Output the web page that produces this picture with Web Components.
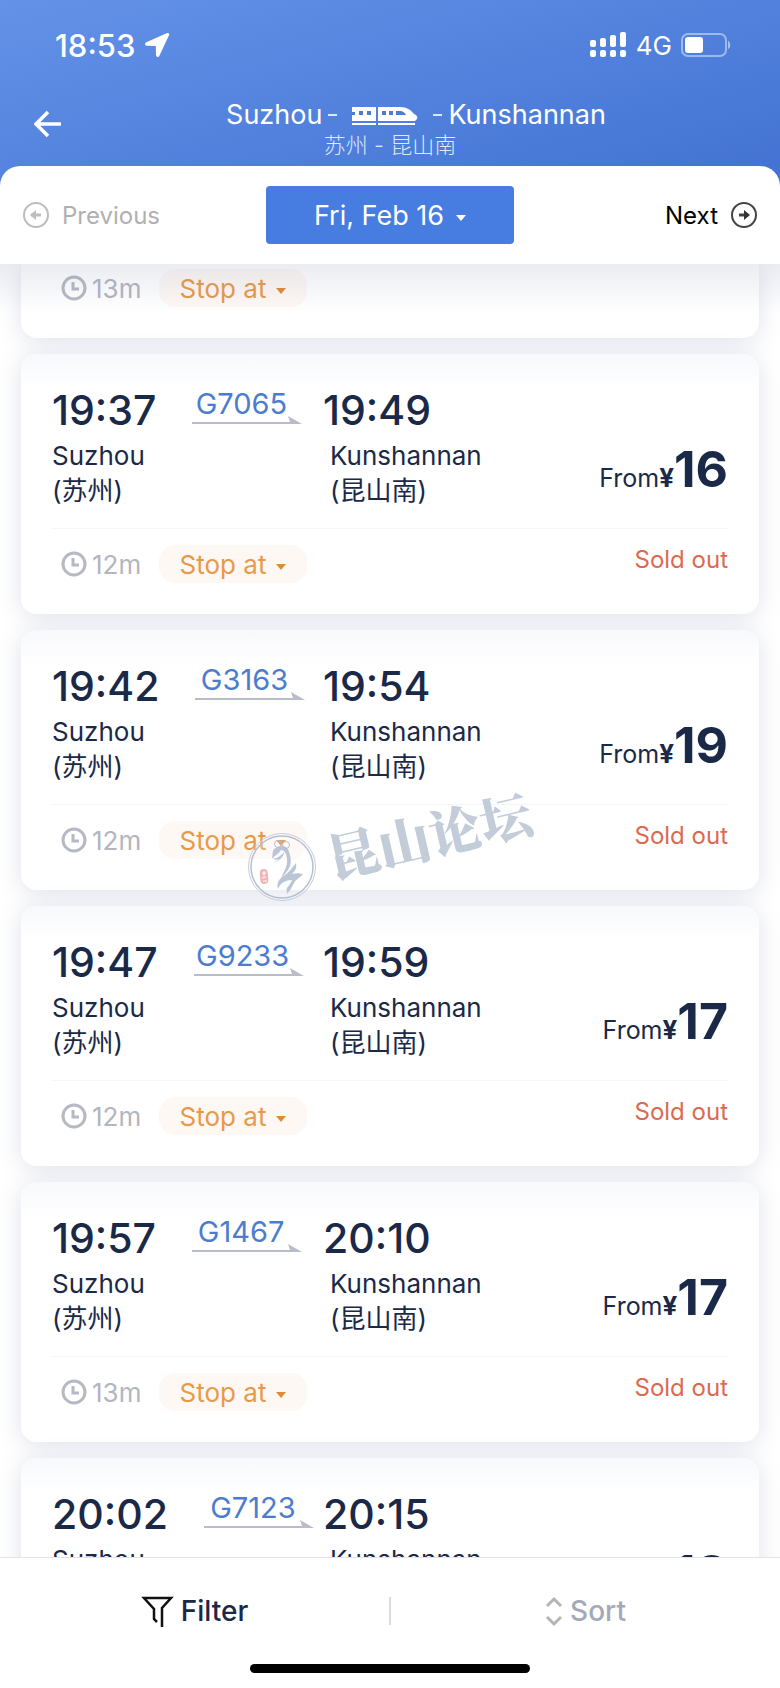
<!DOCTYPE html>
<html lang="en">
<head>
  <meta charset="utf-8">
  <meta name="viewport" content="width=device-width, initial-scale=1">
  <title>Suzhou - Kunshannan</title>
  <style>
    html, body {
      height: 100%;
      margin: 0;
    }

    body {
      font-family: Inter, "Noto Sans CJK SC", sans-serif;
      font-size: 26px;
      color: #1a2947;
      background: #fff;
    }
  </style>
</head>

<body>
  <template id="app-template">
    <style>
      :host {
        display: flex;
        flex-direction: column;
        height: 100vh;
        overflow: hidden;
      }

      header {
        background: linear-gradient(165deg, #6492e8 0%, #4f7fdb 50%, #3c6bcd 100%);
      }

      main {
        position: relative;
        flex: 1;
        min-height: 0;
        display: flex;
        flex-direction: column;
        gap: 16px;
        padding: 0 21px;
        overflow: hidden;
      }

      /* soft shade that the date bar drops on the list */
      main::before {
        content: "";
        position: absolute;
        z-index: 1;
        top: 0;
        left: 0;
        right: 0;
        height: 48px;
        background: linear-gradient(rgba(110, 122, 160, .14), rgba(110, 122, 160, 0));
      }
    </style>
    <header>
      <slot name="header"></slot>
    </header>
    <main>
      <slot></slot>
    </main>
    <slot name="footer"></slot>
  </template>

  <template id="status-template">
    <style>
      :host {
        display: flex;
        align-items: center;
        justify-content: space-between;
        height: 90px;
        padding: 0 49px 0 55px;
        color: #fff;
      }

      div {
        display: flex;
        align-items: center;
        gap: 9px;
      }

      time {
        font-size: 31px;
        font-weight: 500;
      }
    </style>
    <div>
      <time>18:53</time>
      <svg width="26" height="26" viewBox="0 0 26 26" fill="#fff">
        <path d="M23.2 1.1 2.3 10.3c-2 .9-1.5 3.4.5 3.4l9 .2.2 9.200c0 2.100 2.500 2.500 3.400.6L25 3.200c.7-1.500-.4-2.700-1.800-2.100z"/>
      </svg>
    </div>
    <div>
      <svg width="37" height="26" viewBox="0 0 37 26" fill="#fff">
        <rect x="0" y="8" width="6" height="7" rx="2"/>
        <rect x="10" y="6" width="6" height="9" rx="2"/>
        <rect x="20" y="3" width="6" height="12" rx="2"/>
        <rect x="30" y="0" width="6" height="15" rx="2"/>
        <rect x="0" y="18" width="6" height="7" rx="2"/>
        <rect x="10" y="18" width="6" height="7" rx="2"/>
        <rect x="20" y="18" width="6" height="7" rx="2"/>
        <rect x="30" y="18" width="6" height="7" rx="2"/>
      </svg>
      <span>4G</span>
      <svg width="50" height="24" viewBox="0 0 50 24">
        <rect x="1" y="1" width="44" height="22" rx="6" fill="none" stroke="#fff" stroke-opacity=".45" stroke-width="2"/>
        <rect x="4" y="4" width="18" height="16" rx="3" fill="#fff"/>
        <path d="M47 8c3 1 3 7 0 8z" fill="#fff" fill-opacity=".5"/>
      </svg>
    </div>
  </template>

  <template id="route-template">
    <style>
      :host {
        display: grid;
        grid-template-columns: 68px 1fr 68px;
        align-items: center;
        height: 76px;
        color: #fff;
      }

      button {
        justify-self: end;
        margin-bottom: 8px;
        padding: 0;
        border: 0;
        background: none;
        line-height: 0;
      }

      section {
        display: flex;
        flex-direction: column;
        align-items: center;
      }

      h1 {
        display: flex;
        align-items: center;
        gap: 6px;
        margin: 0;
        padding: 2px 0 0 52px;
        font-size: 27px;
        font-weight: 400;
        line-height: 32px;
      }

      h1 svg {
        margin: 4px 9px 0;
      }

      i {
        width: 9px;
        height: 2px;
        background: #dbe6fa;
      }

      p {
        margin: 0;
        font-size: 22px;
        font-weight: 300;
        line-height: 28px;
        color: #dfe9fb;
      }
    </style>
    <button aria-label="Back">
      <svg width="34" height="30" viewBox="0 0 34 30" fill="none" stroke="#fff" stroke-width="3.500">
        <path d="M27 15H3M14 3 2 15l12 12"/>
      </svg>
    </button>
    <section>
      <h1>
        <slot name="from"></slot>
        <i></i>
        <svg width="66" height="20" viewBox="0 0 66 20">
          <path d="M0 0h24v14H0zM26 0h22c7 0 11 3 14 7 3 1 4 3 3 5l-2 2H26z" fill="#fff"/>
          <path d="M0 17h24M26 17h37" stroke="#fff" stroke-width="2"/>
          <path d="M0 5h3v3H0zM7 4h4v4H7zM15 4h4v4h-4zM30 4h4v4h-4zM37 4h4v4h-4zM44 4h4c3 0 5 2 6 4H44z" fill="#4c7bd7"/>
        </svg>
        <i></i>
        <slot name="to"></slot>
      </h1>
      <p><slot name="local"></slot></p>
    </section>
  </template>

  <template id="date-template">
    <style>
      :host {
        display: grid;
        grid-template-columns: 1fr 248px 1fr;
        align-items: center;
        height: 98px;
        padding: 0 22px;
        border-radius: 20px 20px 0 0;
        background: #fff;
      }

      button {
        display: flex;
        align-items: center;
        gap: 12px;
        padding: 0;
        border: 0;
        background: none;
        font: inherit;
        font-size: 24px;
        color: #000;
      }

      .previous {
        justify-self: start;
        color: #b0b0b3;
      }

      .next {
        justify-self: end;
      }

      .date {
        justify-content: center;
        height: 58px;
        border-radius: 4px;
        background: #477ce0;
        font-size: 27px;
        color: #fff;
      }

      .date svg {
        margin-top: 6px;
      }
    </style>
    <button class="previous" disabled>
      <svg width="28" height="28" viewBox="0 0 28 28" fill="none" stroke="#bdbdbf" stroke-width="2">
        <circle cx="14" cy="14" r="12"/>
        <path d="M9 14h10" stroke-width="3"/>
        <path d="m8 14 6-5v10z" fill="#bdbdbf" stroke="none"/>
      </svg>
      <span>Previous</span>
    </button>
    <button class="date">
      <slot></slot>
      <svg width="10" height="6" viewBox="0 0 10 6" fill="#fff"><path d="M0 0h10L5 6z"/></svg>
    </button>
    <button class="next">
      <span>Next</span>
      <svg width="28" height="28" viewBox="0 0 28 28" fill="none" stroke="#444" stroke-width="2">
        <circle cx="14" cy="14" r="12"/>
        <path d="M9 14h9" stroke-width="3"/>
        <path d="m20 14-6-5v10z" fill="#333" stroke="none"/>
      </svg>
    </button>
  </template>

  <template id="train-template">
    <style>
      :host {
        display: block;
        flex: none;
        padding: 30px 31px 31px;
        border-radius: 16px;
        background: linear-gradient(#f8f9fc, #fff 36px);
        box-shadow: 0 3px 24px rgba(100, 112, 156, .2);
      }

      .journey {
        display: grid;
        grid-template-columns: 271px 1fr auto;
        row-gap: 2px;
      }

      .depart {
        display: flex;
        align-items: flex-start;
        gap: 35px;
        height: 52px;
      }

      time {
        font-size: 41px;
        font-weight: 500;
        line-height: 52px;
      }

      a {
        display: flex;
        flex-direction: column;
        align-items: center;
        padding-top: 8px;
        font-size: 29px;
        line-height: 24px;
        color: #4b7cd0;
        text-decoration: none;
      }

      a span {
        padding-right: 12px;
      }

      p {
        margin: 0;
        line-height: 35px;
      }

      .to {
        padding-left: 7px;
      }

      .price {
        display: flex;
        align-items: baseline;
        align-self: end;
        margin: 0 0 6px;
        font-size: 25px;
        line-height: 48px;
      }

      .price b {
        font-size: 26px;
      }

      .price strong {
        font-size: 50px;
      }

      .details {
        display: flex;
        align-items: center;
        height: 38px;
        margin-top: 20px;
        padding-top: 16px;
        border-top: 1px solid #f5f5f7;
      }

      .duration {
        display: flex;
        align-items: center;
        gap: 4px;
        width: 98px;
        padding-left: 9px;
        color: #b3b5c0;
      }

      button {
        display: flex;
        align-items: center;
        justify-content: center;
        gap: 10px;
        width: 148px;
        height: 38px;
        padding: 0;
        border: 0;
        border-radius: 16px;
        background: #fef8f4;
        font: inherit;
        color: #e69a4a;
      }

      button svg {
        margin-top: 6px;
      }

      .state {
        margin: 0 0 10px auto;
        font-size: 24px;
        color: #dc6a50;
      }

      /* scrolled under the date bar: only the details row is left */
      :host([scrolled]) {
        padding-top: 0;
        border-radius: 0 0 16px 16px;
        background: #fff;
      }

      :host([scrolled]) .journey {
        display: none;
      }

      :host([scrolled]) .details {
        margin: 0;
        padding-top: 5px;
        border: 0;
      }
    </style>
    <div class="journey"></div>
    <div class="details">
      <span class="duration">
        <svg width="27" height="27" viewBox="0 0 27 27" fill="none" stroke="#b6b8c3" stroke-width="3">
          <circle cx="13" cy="13" r="11"/>
          <path d="M12 7v7h6"/>
        </svg>
        <span id="duration"></span>
      </span>
      <button>
        Stop at
        <svg width="10" height="6" viewBox="0 0 10 6" fill="#e08a35"><path d="M0 0h10L5 6z"/></svg>
      </button>
      <span class="state"></span>
    </div>
  </template>

  <template id="mark-template">
    <style>
      :host {
        position: absolute;
        z-index: 2;
        top: 556px;
        left: 247px;
        display: flex;
        align-items: center;
        gap: 8px;
        color: #c3ccd9;
        pointer-events: none;
      }

      span {
        font-family: "Noto Serif CJK SC", "Noto Sans CJK SC", sans-serif;
        font-size: 52px;
        font-weight: 900;
        line-height: 52px;
        transform: rotate(-13deg);
      }

      svg {
        margin-top: 12px;
      }

      div {
        display: flex;
        margin-top: -54px;
      }
    </style>
    <svg width="70" height="70" viewBox="0 0 70 70" fill="none" stroke="#b4bfd0">
      <circle cx="35" cy="35" r="33.500" fill="#fff" fill-opacity=".2" stroke="#c4cddb"/>
      <circle cx="35" cy="35" r="31" stroke-width="1.500"/>
      <g fill="#bac6d6" stroke="none">
        <path d="M27 17c6-4 11-4 14 0 2 5 4 11 2 17-2 5-5 8-9 12 3-7 7-12 6-19 0-5-3-9-6-9-2 4-6 5-9 9 1-5 0-7 2-10z"/>
        <path d="M26 27c5-1 9-4 11-7 0 6-6 9-11 11 3-2 5-3 6-4-2 1-4 1-6 0z"/>
        <path d="M31 57c-2-7 2-11 7-14 4-3 7-7 11-12 1 5-1 8-4 11 4-1 8-1 11 0-3 4-7 5-9 9-2 4-4 8-7 11 0-3-1-4 0-6 2-3 4-5 5-8-6 0-12 3-14 9z"/>
      </g>
      <circle cx="31" cy="12" r="3.500"/>
      <circle cx="39" cy="13" r="3.500"/>
      <rect x="13" y="37" width="8" height="15" rx="4" fill="#eeb5b5" stroke="none" transform="rotate(-6 17 44)"/>
      <path d="M15 41h4M17 39v5M15 46l4-1M16 49h4" stroke="#fff"/>
    </svg>
    <div><span><slot></slot></span></div>
  </template>

  <template id="toolbar-template">
    <style>
      :host {
        display: flex;
        flex: none;
        flex-direction: column;
        align-items: center;
        padding-bottom: 15px;
        border-top: 1px solid #e4e4e8;
        background: #fff;
      }

      nav {
        display: grid;
        grid-template-columns: 1fr 2px 1fr;
        align-items: center;
        width: 100%;
        height: 106px;
      }

      nav i {
        height: 28px;
        background: #dcdce0;
      }

      button {
        display: flex;
        align-items: center;
        justify-content: center;
        gap: 7px;
        padding: 0;
        border: 0;
        background: none;
        font: inherit;
        font-size: 28px;
        font-weight: 500;
        color: #1a2947;
      }

      .sort {
        color: #a3a9b8;
      }

      .home {
        width: 36%;
        height: 9px;
        border-radius: 5px;
        background: #000;
      }
    </style>
    <nav>
      <button>
        <svg width="33" height="33" viewBox="0 0 33 33" fill="none" stroke="#111" stroke-width="2.500">
          <path d="M21 32V13L30 3H3l10 11v10l3 3"/>
        </svg>
        <span>Filter</span>
      </button>
      <i></i>
      <button class="sort">
        <svg width="18" height="32" viewBox="0 0 18 32" fill="none" stroke="#b4b4b6" stroke-width="3">
          <path d="m2 11 7-7 7 7M2 22l7 7 7-7"/>
        </svg>
        <span>Sort</span>
      </button>
    </nav>
    <div class="home"></div>
  </template>

  <train-app>
    <status-bar slot="header"></status-bar>
    <route-title slot="header">
      <span slot="from">Suzhou</span>
      <span slot="to">Kunshannan</span>
      <span slot="local">苏州 - 昆山南</span>
    </route-title>
    <date-bar slot="header">Fri, Feb 16</date-bar>

    <train-card scrolled duration="13m"></train-card>
    <train-card train="G7065" depart="19:37" arrive="19:49" duration="12m" price="16" state="Sold out"></train-card>
    <train-card train="G3163" depart="19:42" arrive="19:54" duration="12m" price="19" state="Sold out"></train-card>
    <train-card train="G9233" depart="19:47" arrive="19:59" duration="12m" price="17" state="Sold out"></train-card>
    <train-card train="G1467" depart="19:57" arrive="20:10" duration="13m" price="17" state="Sold out"></train-card>
    <train-card train="G7123" depart="20:02" arrive="20:15" duration="13m" price="18" state="Sold out"></train-card>
    <forum-mark>昆山论坛</forum-mark>

    <tool-bar slot="footer"></tool-bar>
  </train-app>

  <script>
    class TemplateElement extends HTMLElement {

      constructor() {
        super();
        this.attachShadow({ mode: 'open' });
        var t = document.querySelector('#' + this.constructor.template);
        this.shadowRoot.appendChild(document.importNode(t.content, true));
      }
    }

    class TrainApp extends TemplateElement {
      static get template() { return 'app-template'; }
    }

    class StatusBar extends TemplateElement {
      static get template() { return 'status-template'; }
    }

    class RouteTitle extends TemplateElement {
      static get template() { return 'route-template'; }
    }

    class DateBar extends TemplateElement {
      static get template() { return 'date-template'; }
    }

    class ForumMark extends TemplateElement {
      static get template() { return 'mark-template'; }
    }

    class ToolBar extends TemplateElement {
      static get template() { return 'toolbar-template'; }
    }

    class TrainCard extends TemplateElement {
      static get template() { return 'train-template'; }

      connectedCallback() {
        this.render();
      }

      get(name) {
        return this.getAttribute(name) || '';
      }

      render() {
        this.shadowRoot.querySelector('#duration').textContent = this.get('duration');
        this.shadowRoot.querySelector('.state').textContent = this.get('state');

        if (this.hasAttribute('scrolled')) return;

        this.shadowRoot.querySelector('.journey').innerHTML = `
          <div class="depart">
            <time>${this.get('depart')}</time>
            <a href="#${this.get('train')}">
              <span>${this.get('train')}</span>
              <svg width="112" height="10" viewBox="0 0 112 10" fill="#b9bdca">
                <path d="M1 6h98l-2-6 14 8H1z"/>
              </svg>
            </a>
          </div>
          <time>${this.get('arrive')}</time>
          <span></span>
          <p>Suzhou<br>(苏州)</p>
          <p class="to">Kunshannan<br>(昆山南)</p>
          <p class="price">From<b>¥</b><strong>${this.get('price')}</strong></p>`;
      }
    }

    customElements.define('train-app', TrainApp);
    customElements.define('status-bar', StatusBar);
    customElements.define('route-title', RouteTitle);
    customElements.define('date-bar', DateBar);
    customElements.define('train-card', TrainCard);
    customElements.define('forum-mark', ForumMark);
    customElements.define('tool-bar', ToolBar);
  </script>
</body>
</html>
